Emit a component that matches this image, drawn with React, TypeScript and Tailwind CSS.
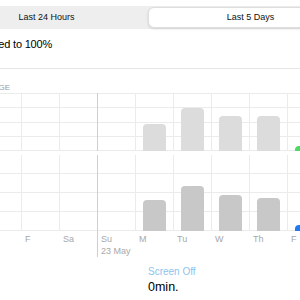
import React from "react";

const days = ["Th", "F", "Sa", "Su", "M", "Tu", "W", "Th", "F"];

// bar heights in px, 0 = no bar
const usage = [0, 0, 0, 0, 27, 43, 35, 35, 5];
const activity = [0, 0, 0, 0, 31, 45, 36, 33, 6];

function Chart({
  values,
  barColor,
  accent,
  lines,
  gridTop,
}: {
  values: number[];
  barColor: string;
  accent: string;
  lines: number;
  gridTop: string;
}) {
  return (
    <div className="relative flex h-full">
      {/* horizontal grid */}
      <div className={`absolute inset-x-0 bottom-0 flex flex-col justify-between ${gridTop}`}>
        {Array.from({ length: lines }).map((_, i) => (
          <div key={i} className="h-px bg-[#ebebeb]" />
        ))}
      </div>
      {values.map((v, i) => (
        <div
          key={i}
          className={`relative flex h-full w-[38px] shrink-0 items-end justify-center border-l ${
            i === 3 ? "border-[#cfcfcf]" : "border-[#ebebeb]"
          }`}
        >
          {v > 0 && (
            <div
              className={`w-[23px] rounded-t-[4px] ${i === values.length - 1 ? accent : barColor}`}
              style={{ height: v }}
            />
          )}
        </div>
      ))}
    </div>
  );
}

export default function App() {
  return (
    <div
      className="h-[300px] w-[300px] overflow-hidden bg-white"
      style={{ fontFamily: '"Liberation Sans", Arial, sans-serif' }}
    >
      {/* Segmented control */}
      <div className="pt-[6px]">
        <div className="-ml-[56px] flex h-[23px] w-[410px] rounded-md bg-[#eeeeef] p-px">
          <div className="flex flex-1 items-center justify-center text-[9px] text-[#111]">
            Last 24 Hours
          </div>
          <div className="flex flex-1 items-center justify-center rounded-md border border-[#dedede] bg-white text-[9px] text-[#111] shadow-sm">
            Last 5 Days
          </div>
        </div>
      </div>

      {/* Last charged */}
      <div className="h-[40px] border-b border-[#e6e6e6] pt-[9px]">
        <div className="flex w-[52px] justify-end">
          <div className="shrink-0 whitespace-nowrap text-[11px] leading-[12px] tracking-[-0.2px] text-black">
            Last Charged to 100%
          </div>
        </div>
      </div>

      {/* Battery usage header */}
      <div className="mt-[13px] flex h-[11px] w-[10px] justify-end">
        <div className="shrink-0 whitespace-nowrap text-[8px] uppercase leading-[11px] text-[#9a9a9e]">
          Battery Usage
        </div>
      </div>

      {/* Charts */}
      <div className="-ml-[17px]">
        <div className="h-[58px]">
          <Chart values={usage} barColor="bg-[#dcdcdc]" accent="bg-[#4cd964]" lines={5} gridTop="top-0" />
        </div>
        <div className="mt-[4px] h-[76px]">
          <Chart values={activity} barColor="bg-[#c8c8c8]" accent="bg-[#1f7cf0]" lines={4} gridTop="top-[18px]" />
        </div>
        {/* Day labels */}
        <div className="flex">
          {days.map((d, i) => (
            <div
              key={i}
              className={`h-[26px] w-[38px] shrink-0 border-l pl-[3px] text-[9px] leading-[11px] text-[#a8a8a8] ${
                i === 3 ? "border-[#cfcfcf]" : "border-transparent"
              }`}
            >
              <div className="pt-[3px]">{d}</div>
              {i === 3 && <div className="mt-[1px] whitespace-nowrap">23 May</div>}
            </div>
          ))}
        </div>
      </div>

      {/* Screen off */}
      <div className="ml-[148px] mt-[9px]">
        <div className="text-[10px] leading-[12px] text-[#8cc4ec]">Screen Off</div>
        <div className="mt-[2px] text-[12.5px] leading-[15px] text-black">0min.</div>
      </div>
    </div>
  );
}
